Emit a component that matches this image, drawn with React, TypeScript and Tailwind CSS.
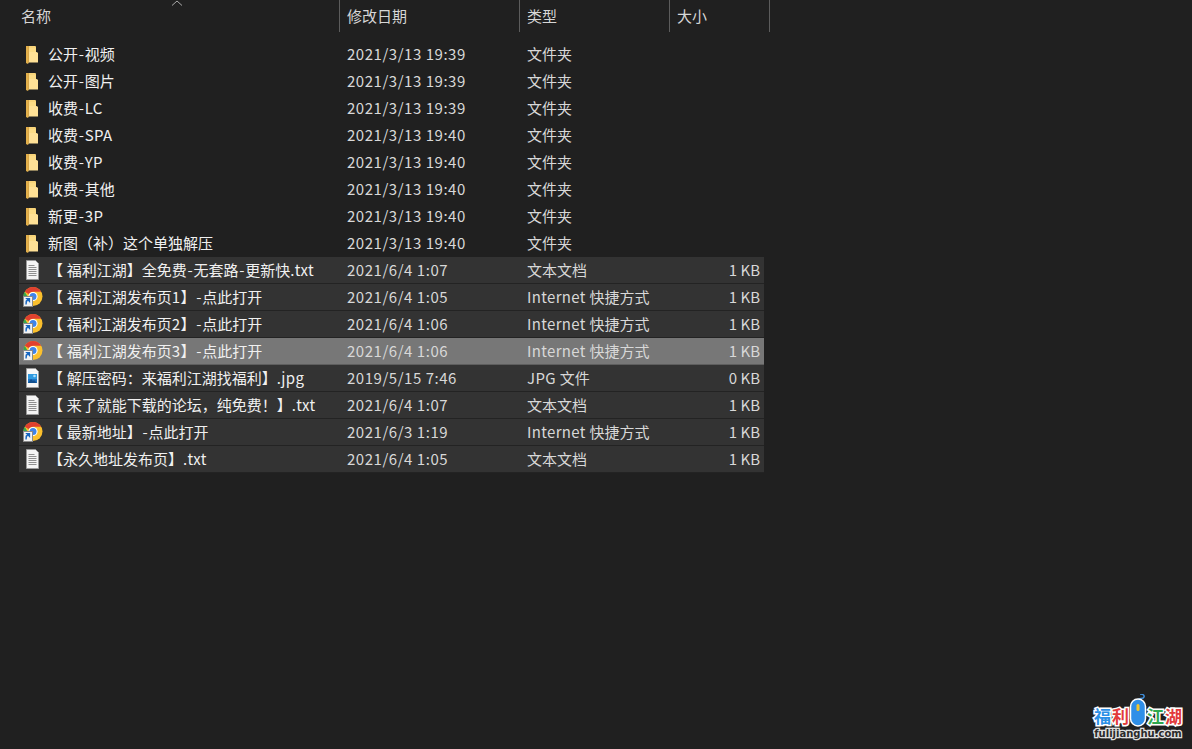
import React from 'react';

const FONT = 'font-["Noto_Sans_CJK_SC","Open_Sans",sans-serif]';

type Kind = 'folder' | 'txt' | 'url' | 'jpg';

interface Row {
  name: string;
  date: string;
  type: string;
  size?: string;
  kind: Kind;
  active?: boolean;
}

const rows: Row[] = [
  { name: '公开-视频', date: '2021/3/13 19:39', type: '文件夹', kind: 'folder' },
  { name: '公开-图片', date: '2021/3/13 19:39', type: '文件夹', kind: 'folder' },
  { name: '收费-LC', date: '2021/3/13 19:39', type: '文件夹', kind: 'folder' },
  { name: '收费-SPA', date: '2021/3/13 19:40', type: '文件夹', kind: 'folder' },
  { name: '收费-YP', date: '2021/3/13 19:40', type: '文件夹', kind: 'folder' },
  { name: '收费-其他', date: '2021/3/13 19:40', type: '文件夹', kind: 'folder' },
  { name: '新更-3P', date: '2021/3/13 19:40', type: '文件夹', kind: 'folder' },
  { name: '新图（补）这个单独解压', date: '2021/3/13 19:40', type: '文件夹', kind: 'folder' },
  { name: '【 福利江湖】全免费-无套路-更新快.txt', date: '2021/6/4 1:07', type: '文本文档', size: '1 KB', kind: 'txt' },
  { name: '【 福利江湖发布页1】-点此打开', date: '2021/6/4 1:05', type: 'Internet 快捷方式', size: '1 KB', kind: 'url' },
  { name: '【 福利江湖发布页2】-点此打开', date: '2021/6/4 1:06', type: 'Internet 快捷方式', size: '1 KB', kind: 'url' },
  { name: '【 福利江湖发布页3】-点此打开', date: '2021/6/4 1:06', type: 'Internet 快捷方式', size: '1 KB', kind: 'url', active: true },
  { name: '【 解压密码：来福利江湖找福利】.jpg', date: '2019/5/15 7:46', type: 'JPG 文件', size: '0 KB', kind: 'jpg' },
  { name: '【 来了就能下载的论坛，纯免费！】.txt', date: '2021/6/4 1:07', type: '文本文档', size: '1 KB', kind: 'txt' },
  { name: '【 最新地址】-点此打开', date: '2021/6/3 1:19', type: 'Internet 快捷方式', size: '1 KB', kind: 'url' },
  { name: '【永久地址发布页】.txt', date: '2021/6/4 1:05', type: '文本文档', size: '1 KB', kind: 'txt' },
];

// latin runs are a bit wider than in the CJK font
function Label({ text }: { text: string }) {
  const parts = text.split(/(-|[\x20-\x7e]+)/).filter(Boolean);
  return (
    <>
      {parts.map((part, i) =>
        part === '-' ? (
          <span key={i} className="mx-[0.75px]">
            -
          </span>
        ) : /^[\x20-\x7e]/.test(part) ? (
          <span key={i} className="tracking-[0.35px]">
            {part}
          </span>
        ) : (
          <span key={i}>{part}</span>
        ),
      )}
    </>
  );
}

function FolderIcon() {
  return (
    <svg width="20" height="20" viewBox="0 0 20 20">
      <path d="M3 1h3v16l-1 2l-2-1z" fill="#e3b04b" />
      <path d="M5 1h7.500l.5 1v5h-8z" fill="#f8d47a" />
      <path d="M6 3h6.500l.5 4l2 1v9h-9z" fill="#fcdc86" />
      <path d="M5.500 7h7.500l2 1v9.500h-9.500z" fill="#ffe196" />
      <path d="M5.500 1v16" stroke="#cf9c3e" strokeWidth="0.800" />
    </svg>
  );
}

function TxtIcon() {
  return (
    <svg width="20" height="20" viewBox="0 0 20 20">
      <path d="M3.500 .5h9l3 3v16h-12z" fill="#f4f4f4" stroke="#9a9a9a" />
      <path d="M5.500 5.500h6M5.500 7.500h8M5.500 9.500h8M5.500 11.500h8M5.500 13.500h8M5.500 15.500h8" stroke="#8f8f8f" />
    </svg>
  );
}

function JpgIcon() {
  return (
    <svg width="20" height="20" viewBox="0 0 20 20">
      <path d="M3.500 .5h9l3 3v16h-12z" fill="#f7f7f7" stroke="#9e9e9e" />
      <rect x="5" y="6" width="9" height="9" fill="#1f74c4" />
      <path d="M5 6h9v5h-9z" fill="#2f9ae0" />
      <circle cx="11.500" cy="8" r="1.300" fill="#a8e0ff" />
      <path d="M5 15l3-4l2 2l1-1l3 3z" fill="#12508f" />
    </svg>
  );
}

function ChromeIcon() {
  return (
    <svg width="20" height="20" viewBox="0 0 20 20">
      <circle cx="10" cy="9.500" r="9.500" fill="#fbc02d" />
      <path d="M10 0a9.500 9.500 0 0 1 8.230 4.750h-8.230a4.750 4.750 0 0 0-4.110 2.380L1.770 4.750A9.500 9.500 0 0 1 10 0z" fill="#e0402f" />
      <path d="M1.770 4.750L5.890 11.880a4.750 4.750 0 0 0 4.110 2.370L7.500 19a9.500 9.500 0 0 1-5.730-14.250z" fill="#35a853" />
      <circle cx="10" cy="9.500" r="4.600" fill="#fff" />
      <circle cx="10" cy="9.500" r="3.500" fill="#3f84ea" />
      <rect x="0.500" y="9.500" width="9" height="10" fill="#f2f2f2" stroke="#8a8a8a" strokeWidth="1" />
      <path d="M3 17.500l.2-3.500 2-1.500M3.800 11.700h2.700v2.700z" fill="#1665c0" stroke="#1665c0" strokeWidth="1.300" />
    </svg>
  );
}

function FileIcon({ kind }: { kind: Kind }) {
  if (kind === 'folder') return <FolderIcon />;
  if (kind === 'txt') return <TxtIcon />;
  if (kind === 'jpg') return <JpgIcon />;
  return <ChromeIcon />;
}

function Watermark() {
  const stroke = '[-webkit-text-stroke:3px_white] [paint-order:stroke_fill]';
  return (
    <div className="absolute right-[10px] bottom-[9px] flex flex-col items-center">
      <div className={`flex h-[20px] items-center text-[17px] leading-[20px] font-bold ${FONT}`}>
        <span className={`text-[#2a8fe6] ${stroke}`}>福</span>
        <span className={`ml-[1px] text-[#e23b3b] ${stroke}`}>利</span>
        <svg width="18" height="34" viewBox="0 0 18 34" className="-mt-[10px]">
          <path d="M9 7c0-4 5-1 6-4s-4-3-4-3" fill="none" stroke="#3f8fdc" strokeWidth="1.500" />
          <rect x="1.500" y="5" width="15" height="27" rx="7.500" fill="#2f8fe8" stroke="white" strokeWidth="1.500" />
          <rect x="7.500" y="10" width="3" height="7" rx="1.500" fill="#f1c52e" />
        </svg>
        <span className={`text-[#2fa84f] ${stroke}`}>江</span>
        <span className={`ml-[1px] text-[#e23b3b] ${stroke}`}>湖</span>
      </div>
      <div className="mt-[2px] font-['DejaVu_Sans',sans-serif] text-[10px] leading-[12px] font-bold text-[#2a2a2a] [-webkit-text-stroke:2.500px_#e0e0e0] [paint-order:stroke_fill]">
        fulijianghu.com
      </div>
    </div>
  );
}

export default function App() {
  return (
    <div className={`relative h-[749px] w-[1192px] overflow-hidden bg-[#202020] text-[15px] text-[#f0f0f0] ${FONT}`}>
      <div className="relative flex h-8 w-[770px] text-[#d6d6d6]">
        <svg width="12" height="6" viewBox="0 0 12 6" className="absolute top-0 left-[171px]">
          <path d="M1 5.500l5-4.500l5 4.500" fill="none" stroke="#a8a8a8" />
        </svg>
        <div className="flex w-[340px] items-center border-r border-[#5c5c5c] pl-[21px]">名称</div>
        <div className="flex w-[180px] items-center border-r border-[#5c5c5c] pl-[7px]">修改日期</div>
        <div className="flex w-[150px] items-center border-r border-[#5c5c5c] pl-[7px]">类型</div>
        <div className="flex w-[100px] items-center border-r border-[#5c5c5c] pl-[7px]">大小</div>
      </div>

      <div className="mt-[9px] ml-[19px] flex w-[745px] flex-col">
        {rows.map((row) => (
          <div
            key={row.name}
            className={`flex h-[27px] items-center leading-none ${
              row.kind === 'folder'
                ? ''
                : row.active
                  ? 'border-b border-[#5e5e5e] bg-[#777777]'
                  : 'border-b border-[#232323] bg-[#333333]'
            }`}
          >
            <div className="mr-[1px] flex w-[28px] justify-center">
              <FileIcon kind={row.kind} />
            </div>
            <div className="w-[299px] pb-[2px] whitespace-pre">
              <Label text={row.name} />
            </div>
            <div className="w-[180px] pb-[2px] tracking-[0.53px] text-[#d8d8d8]">{row.date}</div>
            <div className="w-[150px] pb-[2px] text-[#d8d8d8]">
              <Label text={row.type} />
            </div>
            <div className="w-[87px] pr-[4px] pb-[2px] text-right text-[#d8d8d8]">{row.size}</div>
          </div>
        ))}
      </div>

      <Watermark />
    </div>
  );
}
